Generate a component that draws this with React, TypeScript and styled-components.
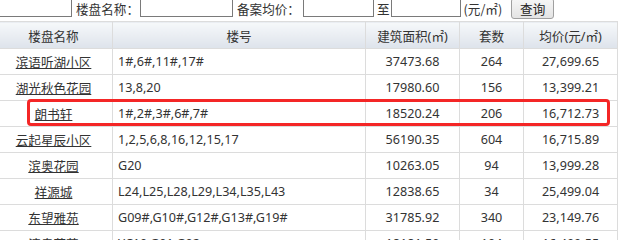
import React from 'react';
import styled, { createGlobalStyle } from 'styled-components';

const GlobalStyle = createGlobalStyle`
  html, body {
    margin: 0;
    padding: 0;
    overflow: hidden;
    background: #fff;
  }
  body {
    font-family: "Noto Sans", "Noto Sans CJK SC", sans-serif;
    font-size: 12.6px;
    color: #333;
  }
`;

const Page = styled.div`
  width: 618px;
  height: 240px;
  overflow: hidden;
`;

const SearchBar = styled.div`
  display: flex;
  align-items: flex-start;
  height: 21px;
  white-space: nowrap;
`;

const SearchInput = styled.input<{ $w: number; $ml?: number }>`
  box-sizing: border-box;
  width: ${({ $w }) => $w}px;
  height: 20px;
  margin: -3px 0 0 ${({ $ml = 0 }) => $ml}px;
  padding: 0 3px;
  border: 1px solid #7a7a7a;
  border-top-color: #5a5a5a;
  background: #fff;
  font: inherit;
  outline: none;
`;

const Label = styled.span<{ $ml?: number }>`
  margin-left: ${({ $ml = 4 }) => $ml}px;
  line-height: 17px;
  font-family: "Noto Sans CJK SC", sans-serif;
  color: #333;
`;

const QueryButton = styled.button`
  box-sizing: border-box;
  height: 21px;
  width: 43px;
  margin: -2px 0 0 9px;
  padding: 0;
  border: 1px solid #a0a0a0;
  border-radius: 3px;
  background: linear-gradient(#f6f6f6, #e4e4e4);
  font-family: "Noto Sans CJK SC", sans-serif;
  font-size: 12.6px;
  line-height: 19px;
  color: #222;
`;

const TableWrap = styled.div`
  position: relative;
  margin-left: -6px;
  width: 623px;
`;

const Table = styled.table`
  border-collapse: collapse;
  table-layout: fixed;
  width: 623px;
`;

const HeadCell = styled.th`
  height: 26px;
  padding: 0;
  border: 1px solid #dcdcdc;
  background: linear-gradient(#f6f8fa, #dde3eb);
  font-weight: normal;
  font-family: "Noto Sans", "Noto Sans CJK SC", sans-serif;
  color: #333;
  text-align: center;
  vertical-align: middle;
`;

const Cell = styled.td<{ $align?: 'left' | 'center' }>`
  height: 25px;
  padding: 0 0 0 ${({ $align }) => ($align === 'left' ? '5px' : '0')};
  border: 1px solid #dcdcdc;
  text-align: ${({ $align = 'center' }) => $align};
  vertical-align: middle;
  white-space: nowrap;
  color: #333;
`;

const NameLink = styled.a`
  color: #333;
  text-decoration: underline;
  font-family: "Noto Sans CJK SC", sans-serif;
`;

const Highlight = styled.div`
  position: absolute;
  left: 33px;
  top: 78px;
  width: 583px;
  height: 27px;
  box-sizing: border-box;
  border: 3px solid #f42626;
  border-radius: 4px;
  pointer-events: none;
`;

type Row = {
  name: string;
  buildings: string;
  area: string;
  units: string;
  price: string;
};

const rows: Row[] = [
  { name: '滨语听湖小区', buildings: '1#,6#,11#,17#', area: '37473.68', units: '264', price: '27,699.65' },
  { name: '湖光秋色花园', buildings: '13,8,20', area: '17980.60', units: '156', price: '13,399.21' },
  { name: '朗书轩', buildings: '1#,2#,3#,6#,7#', area: '18520.24', units: '206', price: '16,712.73' },
  { name: '云起星辰小区', buildings: '1,2,5,6,8,16,12,15,17', area: '56190.35', units: '604', price: '16,715.89' },
  { name: '滨奥花园', buildings: 'G20', area: '10263.05', units: '94', price: '13,999.28' },
  { name: '祥源城', buildings: 'L24,L25,L28,L29,L34,L35,L43', area: '12838.65', units: '34', price: '25,499.04' },
  { name: '东望雅苑', buildings: 'G09#,G10#,G12#,G13#,G19#', area: '31785.92', units: '340', price: '23,149.76' },
  { name: '滨奥花苑', buildings: 'YC10,G01,G02', area: '18181.50', units: '104', price: '16,499.55' },
];

export default function App() {
  return (
    <Page>
      <GlobalStyle />
      <SearchBar>
        <SearchInput $w={82} $ml={-10} />
        <Label>楼盘名称：</Label>
        <SearchInput $w={93} $ml={1} />
        <Label>备案均价：</Label>
        <SearchInput $w={71} $ml={3} />
        <Label $ml={3}>至</Label>
        <SearchInput $w={70} $ml={1} />
        <Label $ml={3}>(元/㎡)</Label>
        <QueryButton>查询</QueryButton>
      </SearchBar>
      <TableWrap>
        <Table>
          <colgroup>
            <col style={{ width: 118 }} />
            <col style={{ width: 253 }} />
            <col style={{ width: 94 }} />
            <col style={{ width: 64 }} />
            <col style={{ width: 94 }} />
          </colgroup>
          <thead>
            <tr>
              <HeadCell>楼盘名称</HeadCell>
              <HeadCell>楼号</HeadCell>
              <HeadCell>建筑面积(㎡)</HeadCell>
              <HeadCell>套数</HeadCell>
              <HeadCell>均价(元/㎡)</HeadCell>
            </tr>
          </thead>
          <tbody>
            {rows.map((r) => (
              <tr key={r.name + r.area}>
                <Cell>
                  <NameLink href="#">{r.name}</NameLink>
                </Cell>
                <Cell $align="left">{r.buildings}</Cell>
                <Cell>{r.area}</Cell>
                <Cell>{r.units}</Cell>
                <Cell>{r.price}</Cell>
              </tr>
            ))}
          </tbody>
        </Table>
        <Highlight />
      </TableWrap>
    </Page>
  );
}
